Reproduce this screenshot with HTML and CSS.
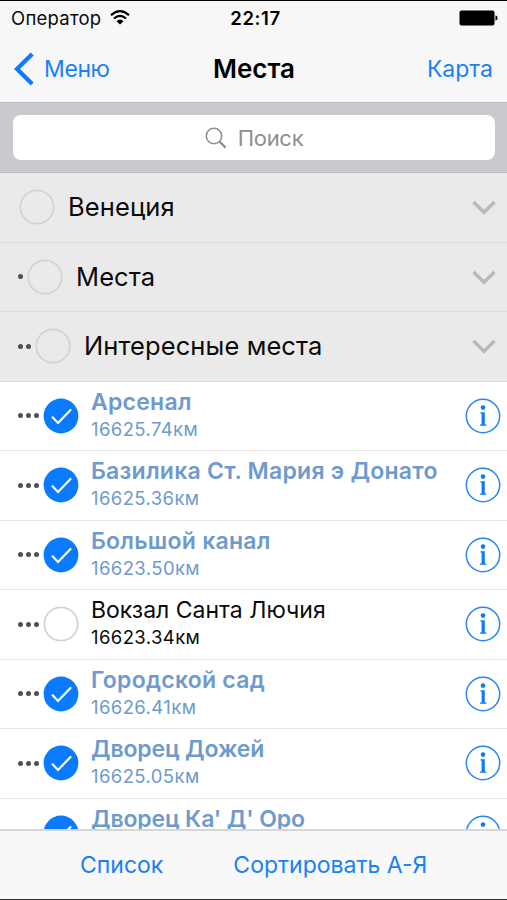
FILE: index.html
```html
<!DOCTYPE html>
<html lang="ru">
<head>
    <meta charset="UTF-8">
    <meta name="viewport" content="width=device-width, initial-scale=1.0">
    <title>Места</title>
    <link rel="stylesheet" href="styles.css">
</head>
<body>

    <!-- Общие иконки -->
    <svg class="icon-defs" width="0" height="0">
        <symbol id="check" viewBox="0 0 36 36">
            <circle cx="18" cy="18" r="17.4" fill="#0a7aff"/>
            <path d="M9.6 19.3 L15 25 L27.5 12" fill="none" stroke="#fff" stroke-width="2.2" stroke-linecap="round"/>
        </symbol>
        <symbol id="empty" viewBox="0 0 36 36">
            <circle cx="18" cy="18" r="16.7" fill="none" stroke="#d3d3d4" stroke-width="1.7"/>
        </symbol>
        <symbol id="info" viewBox="0 0 36 36">
            <circle cx="18" cy="18" r="16.7" fill="none" stroke="#2b84f5" stroke-width="1.5"/>
            <circle cx="18" cy="9.6" r="2.3" fill="#0a7aff"/>
            <path d="M15.4 14.3 H19.8 V26.5 H21.4 V27.7 H15 V26.5 H16.6 V15.5 H15.4 Z" fill="#0a7aff"/>
        </symbol>
        <symbol id="chevron" viewBox="0 0 24 16">
            <path d="M1.5 2 L12 12.3 L22.5 2" fill="none" stroke="#b9b9ba" stroke-width="3.6"/>
        </symbol>
    </svg>

    <div class="screen">

        <!-- Статус -->
        <div class="status-bar">
            <div class="carrier">
                <span>Оператор</span>
                <svg class="wifi" width="20" height="15" viewBox="0 0 20 15">
                    <path d="M1 5.1 Q10 -2.8 19 5.1" fill="none" stroke="#000" stroke-width="2.1"/>
                    <path d="M4 8.5 Q10 3.2 16 8.5" fill="none" stroke="#000" stroke-width="2.1"/>
                    <path d="M6.5 11.2 Q10 8 13.5 11.2 L10 14.6 Z" fill="#000"/>
                </svg>
            </div>
            <span class="time">22:17</span>
            <svg class="battery" width="39" height="16" viewBox="0 0 39 16">
                <rect x="0.5" y="0.5" width="35" height="15" rx="2" fill="#000"/>
                <path d="M36.5 5.3 Q38.6 6 38.6 8 Q38.6 10 36.5 10.7 Z" fill="#000"/>
            </svg>
        </div>

        <!-- Навигация -->
        <div class="nav-bar">
            <a class="back">
                <svg width="20" height="34" viewBox="0 0 20 34">
                    <path d="M18.2 2 L3 17 L18.2 32" fill="none" stroke="#0a7aff" stroke-width="4.2"/>
                </svg>
                <span>Меню</span>
            </a>
            <h1 class="title">Места</h1>
            <a class="map-link">Карта</a>
        </div>

        <!-- Поиск -->
        <div class="search-bar">
            <div class="search-field">
                <svg width="22" height="22" viewBox="0 0 22 22">
                    <circle cx="9" cy="9" r="7.7" fill="none" stroke="#8e8e93" stroke-width="1.6"/>
                    <path d="M14.5 14.5 L20.6 20.6" stroke="#8e8e93" stroke-width="2.2"/>
                </svg>
                <span>Поиск</span>
            </div>
        </div>

        <!-- Список мест -->
        <div class="list">
            <div class="row group root">
                <svg class="mark"><use href="#empty"/></svg>
                <span class="name">Венеция</span>
                <svg class="chevron"><use href="#chevron"/></svg>
            </div>
            <div class="row group">
                <span class="dots"><i></i></span>
                <svg class="mark"><use href="#empty"/></svg>
                <span class="name">Места</span>
                <svg class="chevron"><use href="#chevron"/></svg>
            </div>
            <div class="row group">
                <span class="dots"><i></i><i></i></span>
                <svg class="mark"><use href="#empty"/></svg>
                <span class="name">Интересные места</span>
                <svg class="chevron"><use href="#chevron"/></svg>
            </div>

            <div class="row item checked">
                <span class="dots"><i></i><i></i><i></i></span>
                <svg class="mark"><use href="#check"/></svg>
                <div class="text">
                    <span class="name">Арсенал</span>
                    <span class="distance">16625.74км</span>
                </div>
                <svg class="info"><use href="#info"/></svg>
            </div>
            <div class="row item checked">
                <span class="dots"><i></i><i></i><i></i></span>
                <svg class="mark"><use href="#check"/></svg>
                <div class="text">
                    <span class="name">Базилика Ст. Мария э Донато</span>
                    <span class="distance">16625.36км</span>
                </div>
                <svg class="info"><use href="#info"/></svg>
            </div>
            <div class="row item checked">
                <span class="dots"><i></i><i></i><i></i></span>
                <svg class="mark"><use href="#check"/></svg>
                <div class="text">
                    <span class="name">Большой канал</span>
                    <span class="distance">16623.50км</span>
                </div>
                <svg class="info"><use href="#info"/></svg>
            </div>
            <div class="row item">
                <span class="dots"><i></i><i></i><i></i></span>
                <svg class="mark"><use href="#empty"/></svg>
                <div class="text">
                    <span class="name">Вокзал Санта Лючия</span>
                    <span class="distance">16623.34км</span>
                </div>
                <svg class="info"><use href="#info"/></svg>
            </div>
            <div class="row item checked">
                <span class="dots"><i></i><i></i><i></i></span>
                <svg class="mark"><use href="#check"/></svg>
                <div class="text">
                    <span class="name">Городской сад</span>
                    <span class="distance">16626.41км</span>
                </div>
                <svg class="info"><use href="#info"/></svg>
            </div>
            <div class="row item checked">
                <span class="dots"><i></i><i></i><i></i></span>
                <svg class="mark"><use href="#check"/></svg>
                <div class="text">
                    <span class="name tight">Дворец Дожей</span>
                    <span class="distance">16625.05км</span>
                </div>
                <svg class="info"><use href="#info"/></svg>
            </div>
            <div class="row item checked">
                <span class="dots"><i></i><i></i><i></i></span>
                <svg class="mark"><use href="#check"/></svg>
                <div class="text">
                    <span class="name tight">Дворец Ка' Д' Оро</span>
                </div>
                <svg class="info"><use href="#info"/></svg>
            </div>
        </div>

        <!-- Нижняя панель -->
        <div class="toolbar">
            <a class="list-link">Список</a>
            <a class="sort-link">Сортировать А-Я</a>
        </div>

    </div>

</body>
</html>
```

FILE: styles.css
```css
* {
    box-sizing: border-box;
}

body {
    margin: 0;
    font-family: Inter, "Liberation Sans", sans-serif;
    color: #0b0b0b;
}

.icon-defs {
    display: none;
}

.screen {
    display: flex;
    flex-direction: column;
    height: 900px;
    width: 507px;
    overflow: hidden;
    background: #fff;
    border-top: 1.5px solid #000;
    border-bottom: 1px solid #333;
    white-space: nowrap;
}

/* Статус */
.status-bar {
    display: grid;
    grid-template-columns: 1fr auto 1fr;
    align-items: center;
    height: 34px;
    padding: 0 9px 0 11px;
    background: #f7f7f8;
    font-size: 18.5px;
}

.carrier {
    display: flex;
    align-items: center;
    gap: 9px;
    letter-spacing: 0.25px;
}

.wifi {
    margin-top: -2px;
}

.time {
    padding-left: 2px;
    font-weight: 600;
    letter-spacing: 0.6px;
    color: #000;
}

.battery {
    justify-self: end;
}

/* Навигация */
.nav-bar {
    display: grid;
    grid-template-columns: 1fr auto 1fr;
    align-items: center;
    height: 68px;
    padding: 0 14px;
    background: #f7f7f8;
    border-bottom: 1px solid #b9b9bc;
    font-size: 23px;
}

.back,
.map-link,
.toolbar a {
    color: #1a80f5;
}

.back {
    display: flex;
    align-items: center;
    gap: 10px;
    letter-spacing: -0.4px;
}

.back span,
.map-link {
    padding-top: 1px;
}

.title {
    margin: 0;
    padding-left: 1px;
    font-size: 26px;
    font-weight: 600;
    color: #000;
}

.map-link {
    justify-self: end;
}

/* Поиск */
.search-bar {
    height: 70px;
    padding: 12px 12px 13px 13px;
    background: #c9c9ce;
    border-bottom: 1px solid #bebec2;
}

.search-field {
    display: flex;
    align-items: center;
    justify-content: center;
    gap: 11px;
    height: 45px;
    border-radius: 8px;
    background: #fff;
    color: #8e8e93;
    font-size: 22px;
    letter-spacing: -0.3px;
}

/* Список мест */
.list {
    flex: 1;
    min-height: 0;
    overflow: hidden;
}

.row {
    display: flex;
    align-items: center;
    height: 69.5px;
    padding-left: 18px;
    border-bottom: 1px solid #e6e6e7;
}

.group {
    padding-right: 11px;
    background: #eaeaea;
    border-bottom-color: #dcdcdd;
}

.root {
    padding-left: 15px;
}

.dots {
    display: flex;
    gap: 3px;
}

.dots i {
    width: 5px;
    height: 5px;
    border-radius: 50%;
    background: #505050;
}

.mark,
.info {
    flex: none;
    width: 36px;
    height: 36px;
}

.mark {
    margin-left: 4px;
}

.group .name {
    flex: 1;
    margin-left: 13px;
    padding-bottom: 1px;
    font-size: 25.5px;
    letter-spacing: 0.1px;
}

.chevron {
    width: 24px;
    height: 16px;
    margin-top: 2px;
}

.item {
    padding-right: 6px;
}

.item .dots {
    width: 21px;
}

.text {
    display: flex;
    flex-direction: column;
    flex: 1;
    align-self: flex-start;
    margin-left: 12px;
    padding-top: 6px;
}

.item .name {
    height: 28px;
    line-height: 29px;
    font-size: 23px;
}

.item .distance {
    height: 26px;
    line-height: 26px;
    font-size: 18.5px;
    letter-spacing: 0.4px;
}

.checked .text {
    color: #6e9bcb;
}

.checked .name {
    font-weight: 600;
    letter-spacing: 0.25px;
}

.checked .tight {
    letter-spacing: -0.15px;
}

/* Нижняя панель */
.toolbar {
    display: flex;
    align-items: center;
    gap: 70px;
    height: 70px;
    padding-left: 80px;
    background: #f8f8f9;
    border-top: 2px solid #d6d6d7;
    font-size: 23px;
}
```
